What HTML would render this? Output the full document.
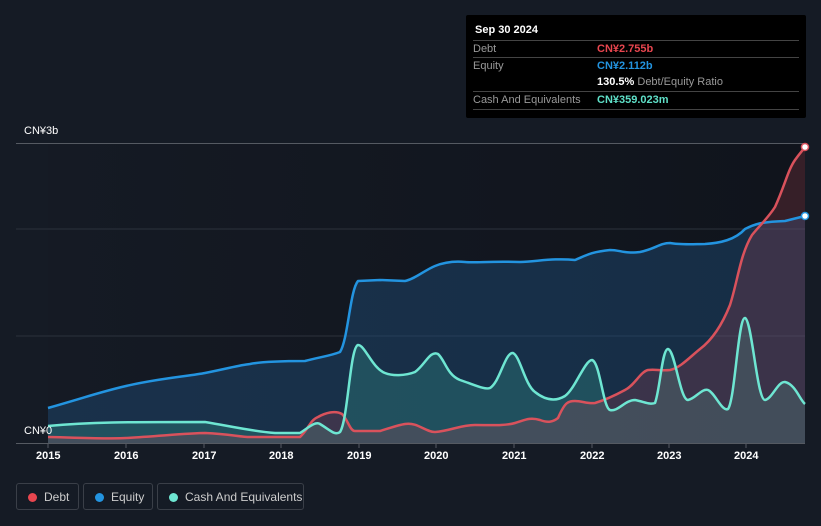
<!DOCTYPE html>
<html><head><style>
body{margin:0;width:821px;height:526px;background:#151b25;font-family:"Liberation Sans",sans-serif;overflow:hidden;position:relative}
.tt{position:absolute;left:466px;top:15px;width:340px;height:103px;background:#000;border-radius:2px}
.tt .h{position:absolute;left:9px;top:9px;color:#fff;font-size:11px;font-weight:bold}
.row{position:absolute;left:7px;width:326px;font-size:11px;color:#999;border-top:1px solid #444;height:17px;line-height:17px}
.row span{position:absolute;left:124px;font-weight:bold}
.lg{position:absolute;top:483px;height:27px;border:1px solid #3a3f48;border-radius:3px;color:#ccc;font-size:12px;line-height:27px;box-sizing:border-box}
.lg i{position:absolute;left:11px;top:9px;width:9px;height:9px;border-radius:50%}
.lg b{font-weight:normal;position:absolute;left:27px}
.ax{position:absolute;top:450px;color:#fff;font-size:11px;font-weight:bold}
</style></head><body>
<svg width="821" height="526" style="position:absolute;left:0;top:0">
<defs><linearGradient id="bg" x1="0" x2="1"><stop offset="0" stop-color="#151a24"/><stop offset="1" stop-color="#10141c"/></linearGradient></defs>
<rect x="48" y="143" width="757" height="300" fill="url(#bg)"/>
<g stroke="#2c323c" stroke-width="1"><line x1="16" y1="229" x2="805" y2="229"/><line x1="16" y1="336" x2="805" y2="336"/></g>
<line x1="16" y1="143.5" x2="805" y2="143.5" stroke="#555a62"/>
<line x1="16" y1="443.5" x2="805" y2="443.5" stroke="#555a62"/>
<path d="M48,408 C90,396 100,392 126,386 C160,378 190,376 205,373 C230,368 240,365 250,364 C265,361 290,361 305,361 C320,357 330,356 340,352 C348,340 350,290 358,281 L380,280 L405,281 C415,279 425,270 435,266 C445,262 455,261 465,262 C475,263 490,261 520,262 C540,261 555,258 575,260 C585,256 590,252 610,250 C620,250 625,254 640,252 C655,249 660,243 670,243 C680,245 695,244 705,244 C720,243 735,240 745,229 C755,224 760,222 785,221 L805,216 L805,443 L48,443 Z" fill="#1e4d7a" fill-opacity="0.45"/>
<path d="M48,426 C90,422 126,422 205,422 C230,426 250,431 275,433 L300,433 C308,428 315,421 320,424 C330,430 335,436 340,432 C348,420 350,347 358,345 C365,345 372,368 385,373 C392,376 405,376 415,372 C425,365 430,350 438,354 C445,360 447,375 460,380 C475,385 485,390 490,388 C500,382 505,352 513,353 C520,356 525,385 535,392 C545,400 555,402 565,396 C575,389 585,360 592,360 C600,362 603,408 610,410 C618,412 625,400 635,400 C645,402 650,405 655,403 C660,390 662,349 668,349 C675,350 680,400 688,400 C695,399 702,388 708,390 C715,393 722,412 728,409 C735,400 738,318 745,318 C752,320 757,400 765,400 C772,399 778,381 785,382 C795,384 800,400 805,404 L805,443 L48,443 Z" fill="#3bb3a0" fill-opacity="0.25"/>
<path d="M48,437 C90,438 110,439 126,438 C160,436 190,433 205,433 C230,434 240,437 250,437 L300,437 C308,430 310,420 318,417 C325,413 335,410 342,414 C348,420 350,431 355,431 L380,431 C390,428 398,425 405,424 C418,422 425,432 435,432 C450,431 460,425 475,425 C490,425 505,426 515,423 C525,420 530,417 540,420 C548,423 553,422 558,418 C565,402 568,401 575,401 C582,401 588,404 595,403 C605,400 612,397 625,390 C635,385 640,372 648,370 C656,369 660,371 670,370 C680,368 690,357 700,349 C712,340 722,325 730,305 C738,280 740,255 752,235 C760,225 768,218 775,207 C785,185 788,170 795,160 C800,153 803,150 805,147 L805,443 L48,443 Z" fill="#c04a55" fill-opacity="0.22"/>
<g fill="none" stroke-width="2.5" stroke-linejoin="round">
<path d="M48,408 C90,396 100,392 126,386 C160,378 190,376 205,373 C230,368 240,365 250,364 C265,361 290,361 305,361 C320,357 330,356 340,352 C348,340 350,290 358,281 L380,280 L405,281 C415,279 425,270 435,266 C445,262 455,261 465,262 C475,263 490,261 520,262 C540,261 555,258 575,260 C585,256 590,252 610,250 C620,250 625,254 640,252 C655,249 660,243 670,243 C680,245 695,244 705,244 C720,243 735,240 745,229 C755,224 760,222 785,221 L805,216" stroke="#2394e0"/>
<path d="M48,437 C90,438 110,439 126,438 C160,436 190,433 205,433 C230,434 240,437 250,437 L300,437 C308,430 310,420 318,417 C325,413 335,410 342,414 C348,420 350,431 355,431 L380,431 C390,428 398,425 405,424 C418,422 425,432 435,432 C450,431 460,425 475,425 C490,425 505,426 515,423 C525,420 530,417 540,420 C548,423 553,422 558,418 C565,402 568,401 575,401 C582,401 588,404 595,403 C605,400 612,397 625,390 C635,385 640,372 648,370 C656,369 660,371 670,370 C680,368 690,357 700,349 C712,340 722,325 730,305 C738,280 740,255 752,235 C760,225 768,218 775,207 C785,185 788,170 795,160 C800,153 803,150 805,147" stroke="#d9525c"/>
<path d="M48,426 C90,422 126,422 205,422 C230,426 250,431 275,433 L300,433 C308,428 315,421 320,424 C330,430 335,436 340,432 C348,420 350,347 358,345 C365,345 372,368 385,373 C392,376 405,376 415,372 C425,365 430,350 438,354 C445,360 447,375 460,380 C475,385 485,390 490,388 C500,382 505,352 513,353 C520,356 525,385 535,392 C545,400 555,402 565,396 C575,389 585,360 592,360 C600,362 603,408 610,410 C618,412 625,400 635,400 C645,402 650,405 655,403 C660,390 662,349 668,349 C675,350 680,400 688,400 C695,399 702,388 708,390 C715,393 722,412 728,409 C735,400 738,318 745,318 C752,320 757,400 765,400 C772,399 778,381 785,382 C795,384 800,400 805,404" stroke="#6ee6d2"/>
</g>
<circle cx="805" cy="147" r="3.5" fill="#fff" stroke="#d9525c" stroke-width="1.5"/>
<circle cx="805" cy="216" r="3.5" fill="#fff" stroke="#2394e0" stroke-width="1.5"/>
<g stroke="#555a62"><line x1="48" y1="443" x2="48" y2="448"/><line x1="126" y1="443" x2="126" y2="448"/><line x1="204" y1="443" x2="204" y2="448"/><line x1="281" y1="443" x2="281" y2="448"/><line x1="359" y1="443" x2="359" y2="448"/><line x1="436" y1="443" x2="436" y2="448"/><line x1="514" y1="443" x2="514" y2="448"/><line x1="592" y1="443" x2="592" y2="448"/><line x1="669" y1="443" x2="669" y2="448"/><line x1="746" y1="443" x2="746" y2="448"/></g>
</svg>
<div style="position:absolute;left:24px;top:125px;color:#fff;font-size:11px">CN¥3b</div>
<div style="position:absolute;left:24px;top:425px;color:#fff;font-size:11px">CN¥0</div>
<div class="ax" style="left:36px">2015</div><div class="ax" style="left:114px">2016</div><div class="ax" style="left:192px">2017</div><div class="ax" style="left:269px">2018</div><div class="ax" style="left:347px">2019</div><div class="ax" style="left:424px">2020</div><div class="ax" style="left:502px">2021</div><div class="ax" style="left:580px">2022</div><div class="ax" style="left:657px">2023</div><div class="ax" style="left:734px">2024</div>
<div class="tt">
<div class="h">Sep 30 2024</div>
<div class="row" style="top:25px">Debt<span style="color:#e8464f">CN¥2.755b</span></div>
<div class="row" style="top:42px">Equity<span style="color:#2394e0">CN¥2.112b</span></div>
<div class="row" style="top:59px;border-top:none"><span style="color:#fff">130.5% <b style="color:#999;font-weight:normal">Debt/Equity Ratio</b></span></div>
<div class="row" style="top:76px;border-bottom:1px solid #444">Cash And Equivalents<span style="color:#5fe0c8">CN¥359.023m</span></div>
</div>
<div class="lg" style="left:16px;width:63px"><i style="background:#e8464f"></i><b>Debt</b></div>
<div class="lg" style="left:83px;width:70px"><i style="background:#2394e0"></i><b>Equity</b></div>
<div class="lg" style="left:157px;width:147px"><i style="background:#6ee6d2"></i><b>Cash And Equivalents</b></div>
</body></html>
